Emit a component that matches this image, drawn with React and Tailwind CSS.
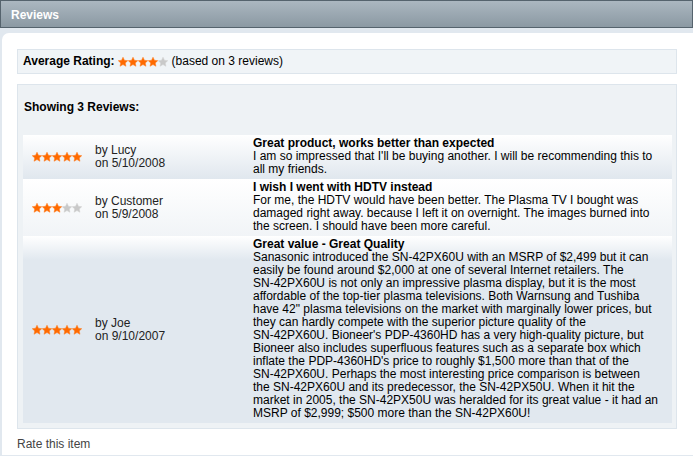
const Star = ({ on }) => (
  <svg width="10" height="10" viewBox="0 0 10 10" className="block">
    <polygon
      points="5,0.2 6.41,3.26 9.76,3.65 7.28,5.94 7.94,9.25 5,7.6 2.06,9.25 2.72,5.94 0.24,3.65 3.59,3.26"
      fill={on ? "#ff6a00" : "#c9c9c9"}
      stroke={on ? "#ff7a1a" : "#d0d0d0"}
      strokeWidth="0.5"
    />
  </svg>
);

const Stars = ({ n }) => (
  <div className="flex">
    {[1, 2, 3, 4, 5].map((i) => (
      <Star key={i} on={i <= n} />
    ))}
  </div>
);

// keep model numbers like SN-42PX60U on one line
const Body = ({ text }) => (
  <div>
    {text.split(" ").map((w, i) =>
      w.includes("-") && w.length > 1 ? (
        <span key={i} className="whitespace-nowrap">
          {w}{" "}
        </span>
      ) : (
        w + " "
      )
    )}
  </div>
);

const reviews = [
  {
    stars: 5,
    by: "Lucy",
    date: "5/10/2008",
    title: "Great product, works better than expected",
    body: "I am so impressed that I'll be buying another. I will be recommending this to all my friends.",
    bg: "bg-gradient-to-b from-white to-[#e0e7ee]",
  },
  {
    stars: 3,
    by: "Customer",
    date: "5/9/2008",
    title: "I wish I went with HDTV instead",
    body: "For me, the HDTV would have been better. The Plasma TV I bought was damaged right away. because I left it on overnight. The images burned into the screen. I should have been more careful.",
    bg: "bg-gradient-to-b from-white to-[#f1f4f7]",
  },
  {
    stars: 5,
    by: "Joe",
    date: "9/10/2007",
    title: "Great value - Great Quality",
    body: "Sanasonic introduced the SN-42PX60U with an MSRP of $2,499 but it can easily be found around $2,000 at one of several Internet retailers. The SN-42PX60U is not only an impressive plasma display, but it is the most affordable of the top-tier plasma televisions. Both Warnsung and Tushiba have 42\" plasma televisions on the market with marginally lower prices, but they can hardly compete with the superior picture quality of the SN-42PX60U. Bioneer's PDP-4360HD has a very high-quality picture, but Bioneer also includes superfluous features such as a separate box which inflate the PDP-4360HD's price to roughly $1,500 more than that of the SN-42PX60U. Perhaps the most interesting price comparison is between the SN-42PX60U and its predecessor, the SN-42PX50U. When it hit the market in 2005, the SN-42PX50U was heralded for its great value - it had an MSRP of $2,999; $500 more than the SN-42PX60U!",
    bg: "bg-[linear-gradient(to_bottom,#ffffff_0px,#e1e8ef_24px,#e1e8ef_100%)]",
  },
];

export default function App() {
  return (
    <div className="w-[693px] h-[456px] bg-white text-[12px] leading-[13px] text-black font-['Liberation_Sans',Arial,sans-serif] overflow-hidden">
      <div className="h-[28px] bg-gradient-to-b from-[#abb7c0] to-[#8b99a3] border border-[#55636d] flex items-center pl-[10px] pt-[2px]">
        <span className="text-white font-bold">Reviews</span>
      </div>
      <div className="bg-[#e1e8ef] pt-[5px] h-[428px]">
        <div className="bg-white rounded-tl-[7px] ml-[2px] h-[422px] pt-[16px] pl-[15px] pr-[16px]">
          <div className="h-[25px] bg-[#f0f4f7] border border-[#dde5ec] flex items-center pl-[5px]">
            <span className="font-bold">Average Rating:</span>
            <span className="ml-[3px] mr-[4px]">
              <Stars n={4} />
            </span>
            <span>(based on 3 reviews)</span>
          </div>
          <div className="mt-[10px] bg-[#eef2f5] border border-[#dde5ec] pl-[5px] pr-[4px] pb-[5px]">
            <div className="h-[44px] flex items-center pl-[1px] font-bold">Showing 3 Reviews:</div>
            <div className="h-[6px]"></div>
            {reviews.map((r, i) => (
              <div key={i} className={`flex ${r.bg}`}>
                <div className="w-[72px] pl-[9px] flex items-center">
                  <Stars n={r.stars} />
                </div>
                <div className="w-[158px] flex flex-col justify-center text-[#222]">
                  <div>by {r.by}</div>
                  <div>on {r.date}</div>
                </div>
                <div className="w-[406px] pt-[2px] pb-[3px]">
                  <div className="font-bold">{r.title}</div>
                  <Body text={r.body} />
                </div>
                <div className="flex-1"></div>
              </div>
            ))}
          </div>
          <div className="mt-[9px] text-[#444]">Rate this item</div>
        </div>
      </div>
    </div>
  );
}
